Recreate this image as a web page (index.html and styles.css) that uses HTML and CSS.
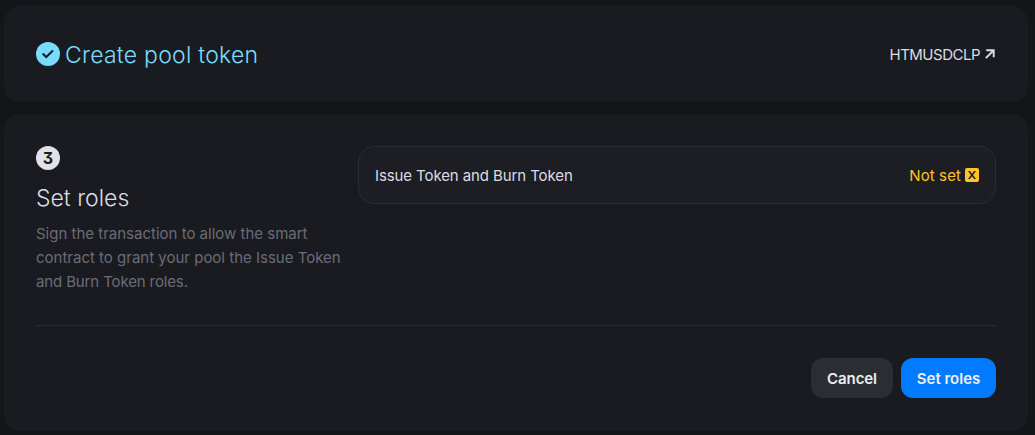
FILE: index.html
```html
<!DOCTYPE html>
<html lang="en">
<head>
<meta charset="utf-8">
<title>Create pool</title>
<link rel="stylesheet" href="styles.css">
</head>
<body>
<main class="steps">
  <section class="card card-done">
    <div class="done-heading">
      <svg class="badge" viewBox="0 0 24 24" aria-hidden="true"><circle cx="12" cy="12" r="12" fill="#78dcff"/><path d="M6.6 11.5l3.6 3.5 6.8-6.5" fill="none" stroke="#1b1c20" stroke-width="2"/></svg>
      <h2 class="title title-done"><span class="t-create">Create pool token</span></h2>
    </div>
    <a class="token"><span class="t-token">HTMUSDCLP</span>
      <svg class="arrow" viewBox="0 0 10 10" aria-hidden="true"><path d="M1.2 1.3H8.7V8.3M8.5 1.5L.8 9.2" fill="none" stroke="currentColor" stroke-width="1.9"/></svg>
    </a>
  </section>
  <section class="card card-active">
    <div class="content">
      <div class="intro">
        <div class="number">3</div>
        <h2 class="title"><span class="t-roles">Set roles</span></h2>
        <p class="description"><span class="t-line1">Sign the transaction to allow the smart</span><br><span class="t-line2">contract to grant your pool the Issue Token</span><br><span class="t-line3">and Burn Token roles.</span></p>
      </div>
      <div class="role">
        <span class="t-issue">Issue Token and Burn Token</span>
        <span class="status"><span class="t-status">Not set</span>
          <svg class="cross" viewBox="0 0 14 14" aria-hidden="true"><rect width="14" height="14" rx="2" fill="#ffc32b"/><path d="M3 3h1.9L7 5.8 9.1 3H11L8 7l3 4H9.1L7 8.2 4.9 11H3l3-4z" fill="#202126"/></svg>
        </span>
      </div>
    </div>
    <div class="actions">
      <button class="button cancel"><span class="t-cancel">Cancel</span></button>
      <button class="button submit"><span class="t-submit">Set roles</span></button>
    </div>
  </section>
</main>
</body>
</html>
```
FILE: styles.css
```css
* { box-sizing: border-box; }
body {
  margin: 0;
  height: 435px;
  overflow: hidden;
  background: #141519;
  color: #dcdde2;
  font: 400 15px/24px Inter, "Liberation Sans", sans-serif;
}
.steps {
  display: flex;
  flex-direction: column;
  gap: 12px;
  padding: 6px 7px 5px 4px;
}
.card { background: #1a1b20; border-radius: 16px; padding: 32px; }
.card-done {
  height: 96px;
  display: flex;
  align-items: center;
  justify-content: space-between;
}
.done-heading { display: flex; align-items: center; gap: 5px; }
.badge { width: 24px; height: 24px; display: block; }
.title { margin: 0; font-size: 23px; line-height: 32px; font-weight: 300; }
.title-done { color: #78dcff; padding-top: 2px; }
.title span, .description span, .token span, .role span, .button span { white-space: nowrap; }
.token { display: flex; align-items: center; gap: 5px; padding: 1px 1px 0 0; }
.arrow { width: 10px; height: 10px; margin-top: -1px; }
.card-active { height: 317px; }
.content {
  display: grid;
  grid-template-columns: 306px 638px;
  gap: 16px;
  align-items: start;
}
.number {
  width: 24px;
  height: 24px;
  border-radius: 50%;
  background: #e2e3e8;
  color: #1b1c20;
  font-size: 16px;
  font-weight: 700;
  font-feature-settings: "cv09";
  text-align: center;
}
.intro .title { margin-top: 12px; }
.description { margin: 8px 0 0; color: #6b6c77; }
.role {
  display: flex;
  align-items: center;
  justify-content: space-between;
  height: 58px;
  padding: 1px 16px 0;
  background: #1d1e23;
  border: 1px solid #2b2c31;
  border-radius: 16px;
}
.status { display: flex; align-items: center; gap: 4px; color: #ffc32b; }
.cross { width: 14px; height: 14px; margin-top: -1px; }
.actions {
  display: flex;
  justify-content: flex-end;
  gap: 8px;
  margin-top: 31px;
  padding-top: 32px;
  border-top: 1px solid #2b2c31;
}
.button {
  display: flex;
  align-items: center;
  justify-content: center;
  height: 40px;
  padding: 1px 0 0;
  border: 0;
  border-radius: 12px;
  color: #edeef2;
  font: 600 15px/24px Inter, "Liberation Sans", sans-serif;
}
.cancel { width: 82px; background: #2b2d34; }
.submit { width: 95px; background: #007bff; }
.t-create { letter-spacing: .25px; }
.t-token { letter-spacing: -.5px; }
.t-line1, .t-line2 { letter-spacing: 0; }
.t-line3 { letter-spacing: -.13px; }
.t-issue { letter-spacing: -.1px; }
.t-status { letter-spacing: .1px; }
.t-cancel { letter-spacing: -.1px; }
```
